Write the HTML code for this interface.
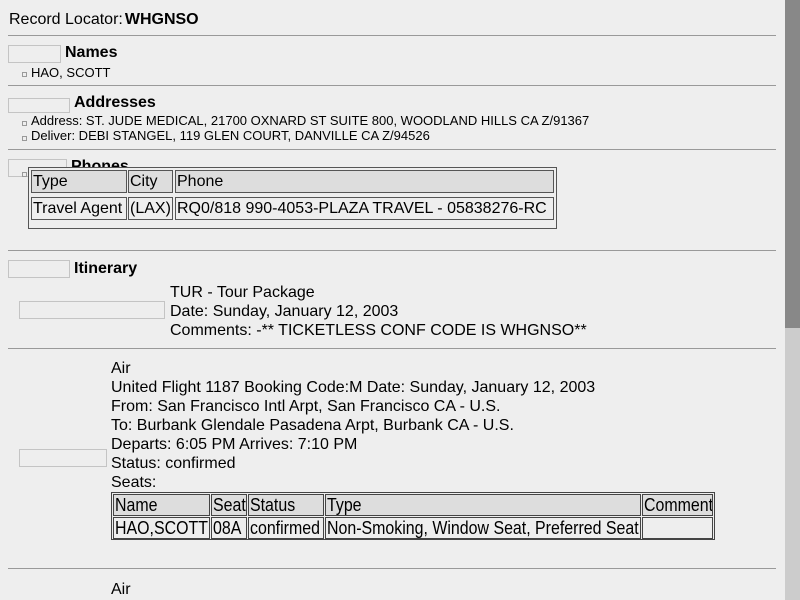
<!DOCTYPE html>
<html><head><meta charset="utf-8"><style>
body{margin:0;width:800px;height:600px;overflow:hidden;background:#eeeeee;font-family:"Liberation Sans",sans-serif;color:#000;position:relative}
div,span{position:absolute;white-space:nowrap}
.hr{left:8px;width:768px;height:0;border-top:1px solid #999}
.box{border:1px solid #c4c4c4;box-sizing:border-box}
.h{font-weight:bold;font-size:16px;line-height:18px}
.li{font-size:13px;left:31px;line-height:15px}
.b{left:22px;width:3px;height:3px;border:1px solid #999}
.t{font-size:16px;line-height:19px}
.c{border:1px solid #555;box-sizing:border-box;font-size:16px;line-height:21px;padding-left:1px;overflow:hidden}
.hd{background:#ddd}
.n{display:inline-block;position:static;transform:scaleX(0.885);transform-origin:left}
.c2{border:1px solid #444;box-sizing:border-box;font-size:18px;line-height:20px;padding-left:1px;overflow:hidden}
</style></head><body>
<div style="left:9px;top:10px;font-size:16px;line-height:19px">Record Locator:<b style="margin-left:2px">WHGNSO</b></div>
<div class="hr" style="top:35px"></div>
<div class="box" style="left:8px;top:45px;width:53px;height:18px"></div>
<div class="h" style="left:65px;top:44px">Names</div>
<div class="b" style="top:72px"></div><div class="li" style="top:65px">HAO, SCOTT</div>
<div class="hr" style="top:85px"></div>
<div class="box" style="left:8px;top:98px;width:62px;height:15px"></div>
<div class="h" style="left:74px;top:94px">Addresses</div>
<div class="b" style="top:121px"></div><div class="li" style="top:113px">Address: ST. JUDE MEDICAL, 21700 OXNARD ST SUITE 800, WOODLAND HILLS CA Z/91367</div>
<div class="b" style="top:136px"></div><div class="li" style="top:128px">Deliver: DEBI STANGEL, 119 GLEN COURT, DANVILLE CA Z/94526</div>
<div class="hr" style="top:149px"></div>
<div class="box" style="left:8px;top:159px;width:59px;height:18px"></div>
<div class="h" style="left:71px;top:158px">Phones</div>
<div class="b" style="top:172px"></div>
<div style="left:28px;top:167px;width:529px;height:62px;border:1px solid #555;box-sizing:border-box;background:#eee"></div>
<div class="c hd" style="left:31px;top:170px;width:96px;height:23px">Type</div>
<div class="c hd" style="left:128px;top:170px;width:45px;height:23px">City</div>
<div class="c hd" style="left:175px;top:170px;width:379px;height:23px">Phone</div>
<div class="c" style="left:31px;top:197px;width:96px;height:23px">Travel Agent</div>
<div class="c" style="left:128px;top:197px;width:45px;height:23px">(LAX)</div>
<div class="c" style="left:175px;top:197px;width:379px;height:23px">RQ0/818 990-4053-PLAZA TRAVEL - 05838276-RC</div>
<div class="hr" style="top:250px"></div>
<div class="box" style="left:8px;top:260px;width:62px;height:18px"></div>
<div class="h" style="left:74px;top:260px">Itinerary</div>
<div class="box" style="left:19px;top:301px;width:146px;height:18px"></div>
<div class="t" style="left:170px;top:283px">TUR - Tour Package<br>Date: Sunday, January 12, 2003<br>Comments: -** TICKETLESS CONF CODE IS WHGNSO**</div>
<div class="hr" style="top:348px"></div>
<div class="box" style="left:19px;top:449px;width:88px;height:18px"></div>
<div class="t" style="left:111px;top:359px">Air<br>United Flight 1187 Booking Code:M Date: Sunday, January 12, 2003<br>From: San Francisco Intl Arpt, San Francisco CA - U.S.<br>To: Burbank Glendale Pasadena Arpt, Burbank CA - U.S.<br>Departs: 6:05 PM Arrives: 7:10 PM<br>Status: confirmed<br>Seats:</div>
<div style="left:111px;top:492px;width:604px;height:48px;border:1px solid #444;box-sizing:border-box"></div>
<div class="c2 hd" style="left:113px;top:494px;width:97px;height:22px"><span class="n">Name</span></div>
<div class="c2 hd" style="left:211px;top:494px;width:36px;height:22px"><span class="n">Seat</span></div>
<div class="c2 hd" style="left:248px;top:494px;width:76px;height:22px"><span class="n">Status</span></div>
<div class="c2 hd" style="left:325px;top:494px;width:316px;height:22px"><span class="n">Type</span></div>
<div class="c2 hd" style="left:642px;top:494px;width:71px;height:22px"><span class="n">Comment</span></div>
<div class="c2" style="left:113px;top:517px;width:97px;height:22px"><span class="n">HAO,SCOTT</span></div>
<div class="c2" style="left:211px;top:517px;width:36px;height:22px"><span class="n">08A</span></div>
<div class="c2" style="left:248px;top:517px;width:76px;height:22px"><span class="n">confirmed</span></div>
<div class="c2" style="left:325px;top:517px;width:316px;height:22px"><span class="n">Non-Smoking, Window Seat, Preferred Seat</span></div>
<div class="c2" style="left:642px;top:517px;width:71px;height:22px"></div>
<div class="hr" style="top:568px"></div>
<div class="t" style="left:111px;top:580px">Air</div>
<div style="left:785px;top:0;width:15px;height:600px;background:#cccccc"></div>
<div style="left:785px;top:0;width:15px;height:328px;background:#888888"></div>
</body></html>
